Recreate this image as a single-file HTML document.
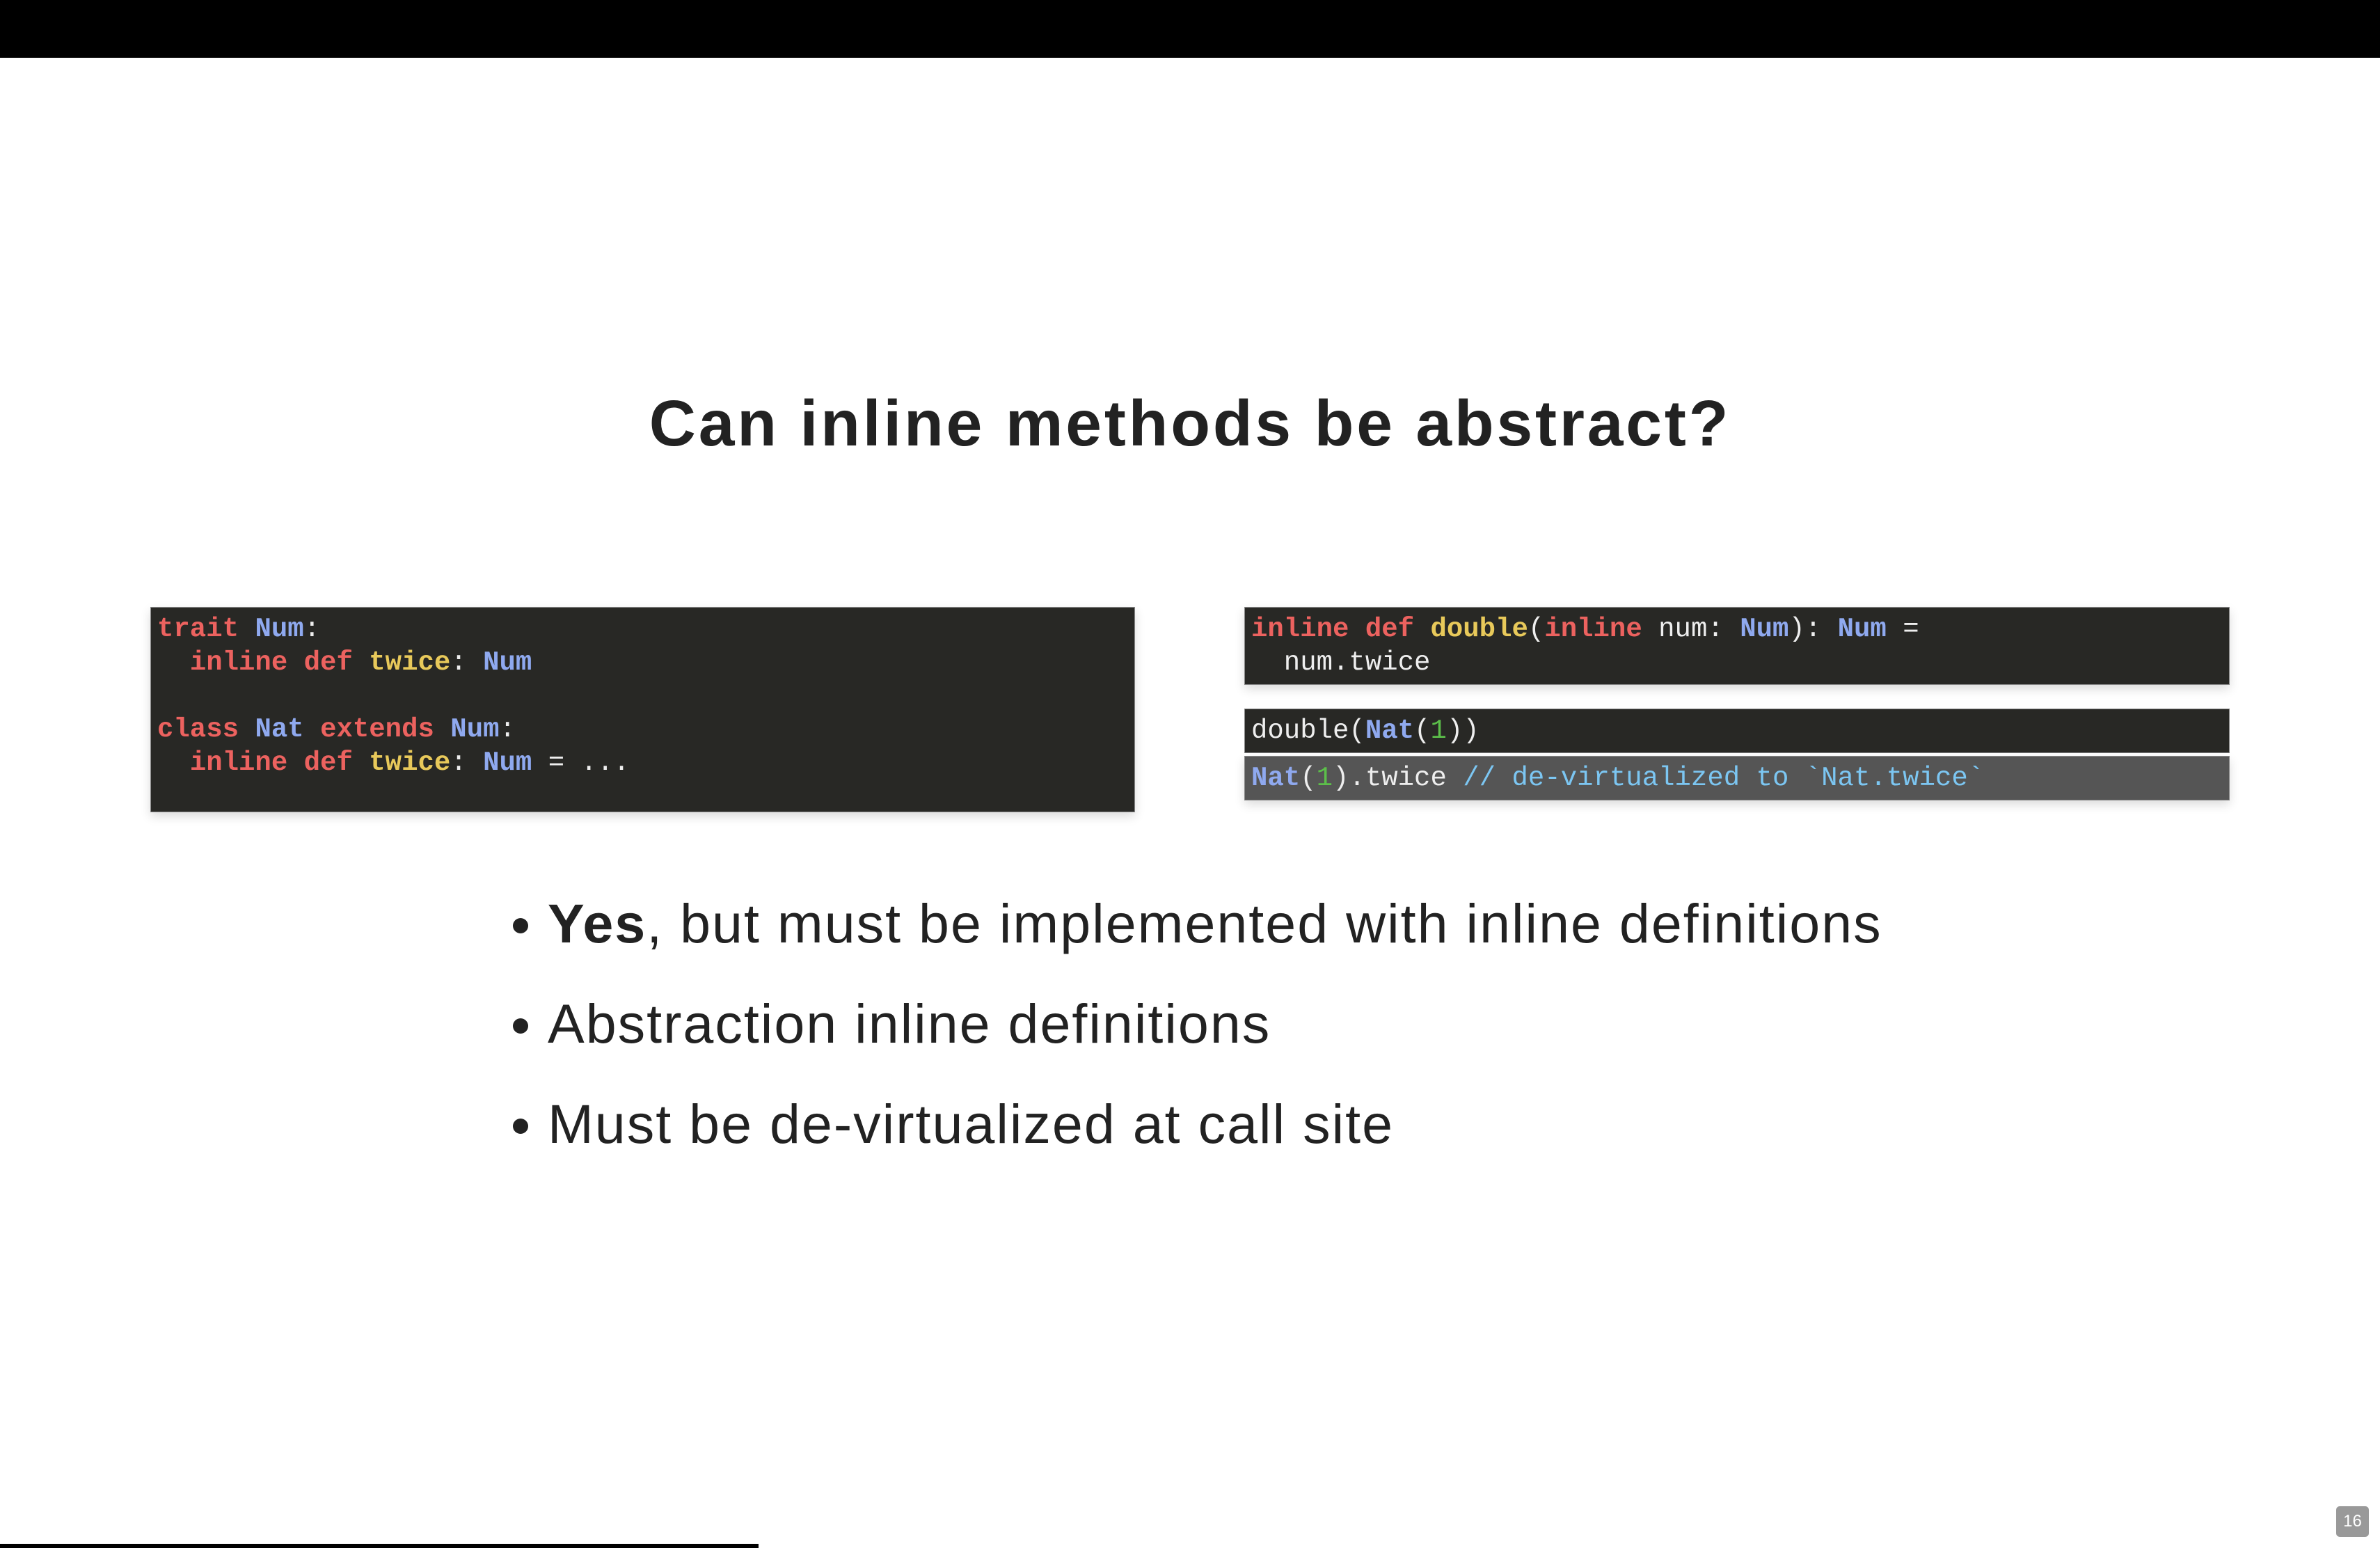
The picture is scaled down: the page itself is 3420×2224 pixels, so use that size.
<!DOCTYPE html>
<html><head><meta charset="utf-8"><style>
html,body{margin:0;padding:0}
body{width:3420px;height:2224px;background:#fff;position:relative;overflow:hidden;font-family:"Liberation Sans",sans-serif}
.top{position:absolute;left:0;top:0;width:3420px;height:83px;background:#000}
h1{position:absolute;left:0;width:3420px;top:553px;margin:0;text-align:center;font-size:93px;font-weight:bold;color:#222;letter-spacing:3.8px;line-height:110px}
.code{position:absolute;background:#282825;font-family:"Liberation Mono",monospace;font-size:39px;line-height:48px;color:#eee;white-space:pre;box-sizing:border-box;padding-left:9px;box-shadow:0 6px 14px rgba(0,0,0,.14);border:1px solid #888}
.k{color:#ec625f;font-weight:bold}.t{color:#8fa9ef;font-weight:bold}.f{color:#e8c95a;font-weight:bold}.n{color:#5cbf4a}.c{color:#7cc6f2}
ul{position:absolute;left:737px;top:1255px;margin:0;padding:0;list-style:none}
li{font-size:79px;color:#222;height:144px;line-height:144px;position:relative;padding-left:50px;letter-spacing:2px;white-space:nowrap}
li:before{content:"";position:absolute;left:0;top:64px;width:22px;height:22px;border-radius:50%;background:#222}
.bar{position:absolute;left:0;top:2218px;width:1090px;height:6px;background:#000}
.pg{position:absolute;left:3357px;top:2164px;width:47px;height:44px;background:#999;border-radius:5px;color:#fff;font-size:24px;line-height:44px;text-align:center}
</style></head><body>
<div class="top"></div>
<h1>Can inline methods be abstract?</h1>
<div class="code" style="left:216px;top:872px;width:1415px;height:295px;padding-top:7px"><span class="k">trait</span> <span class="t">Num</span>:
  <span class="k">inline</span> <span class="k">def</span> <span class="f">twice</span>: <span class="t">Num</span>

<span class="k">class</span> <span class="t">Nat</span> <span class="k">extends</span> <span class="t">Num</span>:
  <span class="k">inline</span> <span class="k">def</span> <span class="f">twice</span>: <span class="t">Num</span> = ...</div>
<div class="code" style="left:1788px;top:872px;width:1416px;height:112px;padding-top:7px"><span class="k">inline</span> <span class="k">def</span> <span class="f">double</span>(<span class="k">inline</span> num: <span class="t">Num</span>): <span class="t">Num</span> =
  num.twice</div>
<div class="code" style="left:1788px;top:1018px;width:1416px;height:64px;line-height:62px;box-shadow:none">double(<span class="t">Nat</span>(<span class="n">1</span>))</div>
<div class="code" style="left:1788px;top:1086px;width:1416px;height:64px;line-height:62px;background:#555"><span class="t">Nat</span>(<span class="n">1</span>).twice <span class="c">// de-virtualized to `Nat.twice`</span></div>
<ul>
<li><b>Yes</b>, but must be implemented with inline definitions</li>
<li>Abstraction inline definitions</li>
<li>Must be de-virtualized at call site</li>
</ul>
<div class="bar"></div>
<div class="pg">16</div>
</body></html>
